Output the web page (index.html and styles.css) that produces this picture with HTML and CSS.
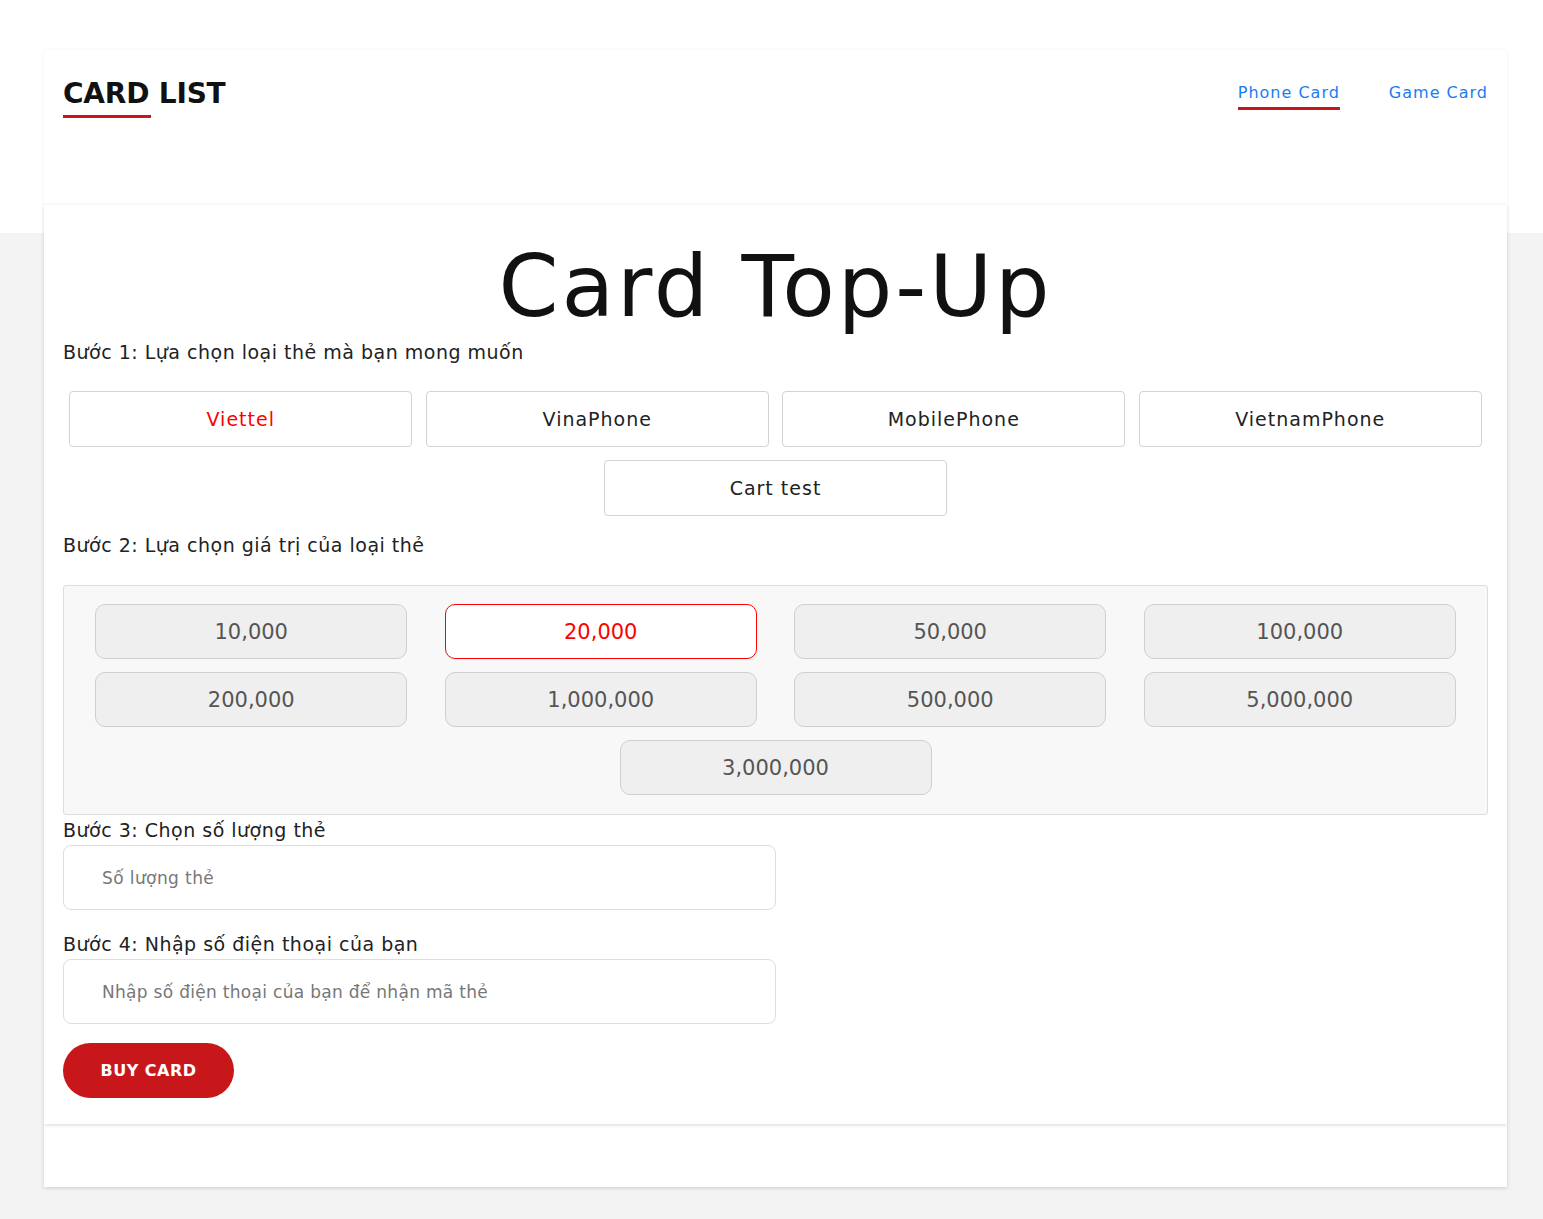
FILE: index.html
```html
<!DOCTYPE html>
<html lang="vi">
<head>
<meta charset="utf-8">
<title>Card Top-Up</title>
<link rel="stylesheet" href="styles.css">
</head>
<body>
<div class="wrap">
  <header class="header">
    <div class="brand">
      <h2 class="brand-title">CARD LIST</h2>
      <span class="brand-line"></span>
    </div>
    <nav class="nav">
      <a class="nav-link active" href="#">Phone Card</a>
      <a class="nav-link" href="#">Game Card</a>
    </nav>
  </header>

  <main class="main">
    <h1 class="title">Card Top-Up</h1>

    <p class="step step1">Bước 1: Lựa chọn loại thẻ mà bạn mong muốn</p>
    <div class="types">
      <button class="type selected">Viettel</button>
      <button class="type">VinaPhone</button>
      <button class="type">MobilePhone</button>
      <button class="type">VietnamPhone</button>
      <button class="type">Cart test</button>
    </div>

    <p class="step step2">Bước 2: Lựa chọn giá trị của loại thẻ</p>
    <div class="values">
      <button class="value">10,000</button>
      <button class="value selected">20,000</button>
      <button class="value">50,000</button>
      <button class="value">100,000</button>
      <button class="value">200,000</button>
      <button class="value">1,000,000</button>
      <button class="value">500,000</button>
      <button class="value">5,000,000</button>
      <button class="value">3,000,000</button>
    </div>

    <p class="step step3">Bước 3: Chọn số lượng thẻ</p>
    <input class="field" type="text" placeholder="Số lượng thẻ">

    <p class="step step4">Bước 4: Nhập số điện thoại của bạn</p>
    <input class="field field-long" type="text" placeholder="Nhập số điện thoại của bạn để nhận mã thẻ">

    <button class="buy">BUY CARD</button>
  </main>

  <footer class="footer"></footer>
</div>
</body>
</html>
```

FILE: styles.css
```css
* { box-sizing: border-box; }

html { background: #f3f3f3; }

body {
  margin: 0;
  padding: 50px 36px 32px 44px;
  background: #f3f3f3 linear-gradient(#ffffff 0, #ffffff 233px, #f3f3f3 233px) no-repeat;
  background-size: 100% 233px;
  font-family: "DejaVu Sans", "Liberation Sans", sans-serif;
  color: #222;
}

.wrap { width: 1463px; }

.header {
  height: 155px;
  background: #fff;
  padding: 0 19px;
  display: flex;
  justify-content: space-between;
  align-items: flex-start;
  box-shadow: 0 0 3px rgba(0, 0, 0, 0.06);
  position: relative;
  z-index: 1;
}

.brand { padding-top: 26px; }

.brand-title {
  margin: 0;
  font-size: 28px;
  font-weight: 700;
  line-height: 36px;
  color: #111;
  letter-spacing: -0.2px;
}

.brand-line {
  display: block;
  width: 88px;
  height: 3px;
  background: #c8171b;
  margin-top: 3px;
}

.nav {
  display: flex;
  gap: 49px;
  padding-top: 32px;
}

.nav-link {
  font-size: 16px;
  line-height: 22px;
  letter-spacing: 1px;
  color: #1a7cf0;
  text-decoration: none;
  padding-bottom: 3px;
  border-bottom: 3px solid transparent;
}

.nav-link.active { border-bottom-color: #c8171b; }

.main {
  background: #fff;
  padding: 31px 19px 26px;
  box-shadow: 0 1px 4px rgba(0, 0, 0, 0.16);
  position: relative;
  z-index: 2;
}

.title {
  margin: 0;
  text-align: center;
  font-size: 86px;
  font-weight: 400;
  line-height: 100px;
  color: #111;
  letter-spacing: 2.9px;
}

.step {
  margin: 0;
  font-size: 19px;
  line-height: 24px;
  letter-spacing: 0.5px;
  color: #222;
}

.step1 { margin-top: 4px; }

.types {
  display: flex;
  flex-wrap: wrap;
  justify-content: center;
  padding: 27px 0 17px;
  gap: 13px 13.5px;
}

.type {
  width: 343px;
  height: 56px;
  background: #fff;
  border: 1px solid #d3d3d3;
  border-radius: 4px;
  font-family: inherit;
  font-size: 19px;
  letter-spacing: 1px;
  color: #222;
}

.type.selected { color: #ff0000; }

.step2 { margin-bottom: 28px; }

.values {
  display: flex;
  flex-wrap: wrap;
  justify-content: center;
  gap: 13px 37.5px;
  padding: 18px 31px 19px;
  background: #f8f8f8;
  border: 1px solid #dddddd;
  border-radius: 3px;
}

.value {
  width: 312px;
  height: 55px;
  background: #efefef;
  border: 1px solid #cfcfcf;
  border-radius: 10px;
  font-family: inherit;
  font-size: 21px;
  color: #555;
}

.value.selected {
  background: #fff;
  border-color: #ff0000;
  color: #ff0000;
}

.step3 { margin-top: 3px; margin-bottom: 3px; }
.step4 { margin-top: 22px; margin-bottom: 3px; }

.field {
  display: block;
  width: 713px;
  height: 65px;
  border: 1px solid #dedede;
  border-radius: 8px;
  padding: 0 38px;
  font-family: inherit;
  font-size: 17px;
  letter-spacing: 0.4px;
  color: #333;
  outline: none;
}

.field-long { letter-spacing: 0.3px; }

.field::placeholder { color: #777; }

.buy {
  display: block;
  margin-top: 19px;
  width: 171px;
  height: 55px;
  border: none;
  border-radius: 28px;
  background: #c8171b;
  color: #fff;
  font-family: inherit;
  font-size: 16px;
  font-weight: 700;
  letter-spacing: 0.5px;
}

.footer {
  height: 63px;
  background: #fff;
  box-shadow: 0 1px 4px rgba(0, 0, 0, 0.16);
  position: relative;
  z-index: 1;
}
```
